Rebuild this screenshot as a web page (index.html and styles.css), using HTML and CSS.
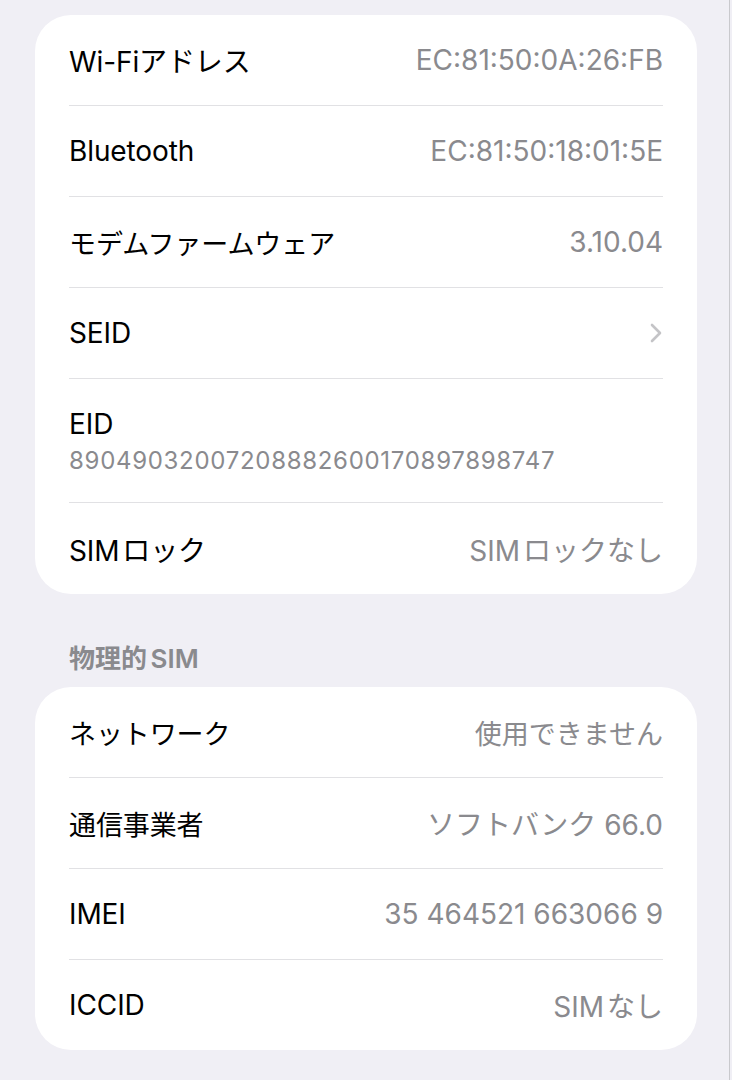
FILE: index.html
```html
<!DOCTYPE html>
<html lang="ja">
<head>
<meta charset="utf-8">
<link rel="stylesheet" href="styles.css">
</head>
<body>
<div class="screen">
  <div class="card card-top">
    <div class="row"><span class="label">Wi-Fiアドレス</span><span class="value">EC:81:50:0A:26:FB</span></div>
    <div class="row"><span class="label">Bluetooth</span><span class="value">EC:81:50:18:01:5E</span></div>
    <div class="row"><span class="label ja">モデムファームウェア</span><span class="value">3.10.04</span></div>
    <div class="row"><span class="label">SEID</span>
      <svg class="chev" width="14" height="22" viewBox="0 0 14 22"><path d="M3 3 L11 11 L3 19" fill="none" stroke="#c4c4c7" stroke-width="2.6" stroke-linecap="round" stroke-linejoin="round"/></svg>
    </div>
    <div class="row row-stack"><span class="label">EID</span><span class="sub">89049032007208882600170897898747</span></div>
    <div class="row"><span class="label tight">SIM ロック</span><span class="value tight">SIM ロックなし</span></div>
  </div>
  <div class="section-head">物理的 SIM</div>
  <div class="card">
    <div class="row"><span class="label ja">ネットワーク</span><span class="value ja">使用できません</span></div>
    <div class="row"><span class="label ja">通信事業者</span><span class="value">ソフトバンク 66.0</span></div>
    <div class="row"><span class="label">IMEI</span><span class="value">35 464521 663066 9</span></div>
    <div class="row"><span class="label">ICCID</span><span class="value tight">SIM なし</span></div>
  </div>
</div>
</body>
</html>
```
FILE: styles.css
```css
html, body {
  margin: 0;
  padding: 0;
  background: #f0eff5;
}
body {
  font-family: "Inter", "Noto Sans CJK JP", sans-serif;
  -webkit-font-smoothing: antialiased;
}
.screen {
  width: 730px;
  height: 1080px;
  box-sizing: border-box;
  padding: 15px 32px 0 35px;
  border-right: 1px solid #c9c9cd;
  overflow: hidden;
}
.card {
  background: #ffffff;
  border-radius: 36px;
  padding: 0 34px;
}
.row {
  height: 90px;
  display: flex;
  align-items: center;
  justify-content: space-between;
  border-top: 1px solid #e1e1e4;
  box-sizing: content-box;
}
.row:first-child {
  border-top: none;
}
.label {
  font-size: 28px;
  color: #000;
  letter-spacing: -0.1px;
  white-space: nowrap;
}
.value {
  font-size: 28px;
  color: #8a8a8e;
  letter-spacing: 0;
  white-space: nowrap;
}
.ja {
  font-size: 27px;
}
.tight {
  word-spacing: -5px;
}
.chev {
  display: block;
}
.row-stack {
  height: 123px;
  flex-direction: column;
  align-items: flex-start;
  justify-content: center;
  gap: 4px;
}
.row-stack .label {
  line-height: 36px;
}
.sub {
  font-size: 24px;
  line-height: 30px;
  color: #8a8a8e;
  letter-spacing: 0.7px;
}
.card-top .row:last-child {
  height: 91px;
}
.section-head {
  padding: 49px 0 12px 34px;
  font-size: 26px;
  line-height: 32px;
  font-weight: 600;
  color: #8a8a8e;
  word-spacing: -3px;
}
```
